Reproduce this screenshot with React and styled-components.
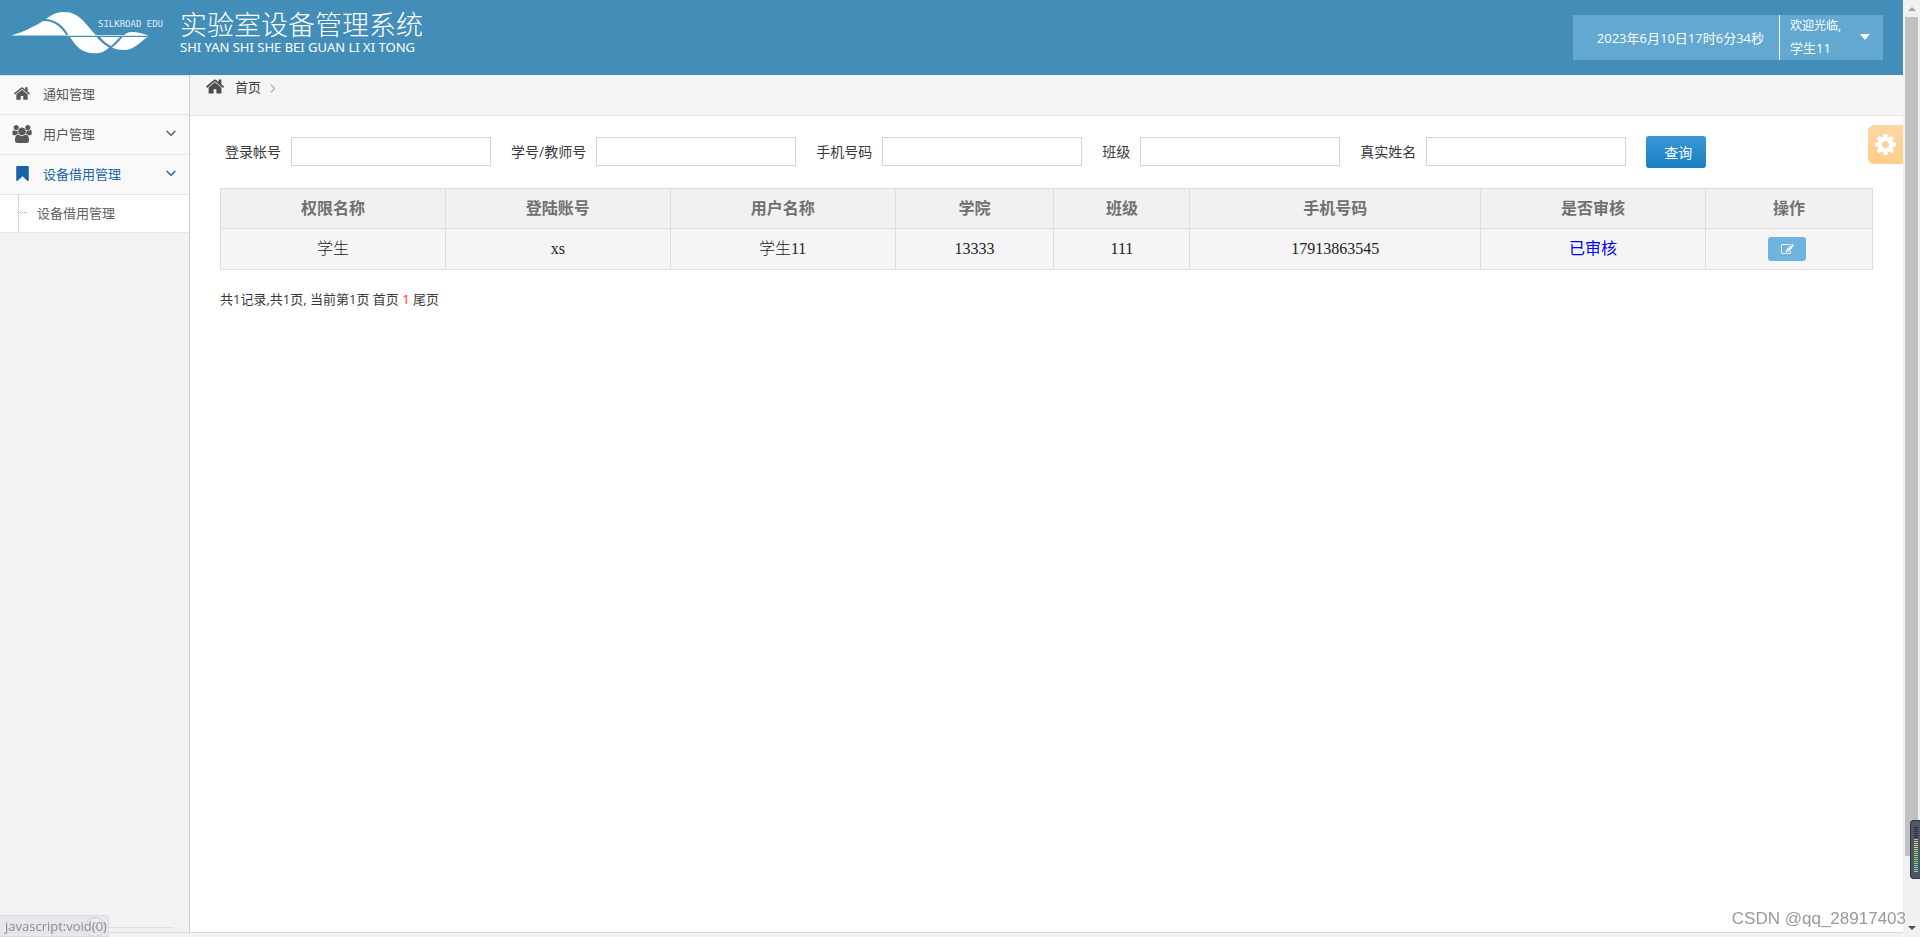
import React from 'react'
import styled, { createGlobalStyle } from 'styled-components'

const GlobalStyle = createGlobalStyle`
	* {
		box-sizing: border-box;
	}
	body {
		margin: 0;
		background-color: #f2f2f2;
		color: #393939;
		font-family: 'Open Sans', 'Noto Sans CJK SC', sans-serif;
		font-size: 13px;
		line-height: 20px;
	}
	a {
		color: inherit;
		text-decoration: none;
	}
	button,
	input {
		font-family: inherit;
	}
`

const Screen = styled.div`
	display: flex;
	min-height: 100vh;
`
const Page = styled.div`
	display: flex;
	flex: 1;
	min-width: 0;
	flex-direction: column;
`

const Header = styled.header`
	display: flex;
	justify-content: space-between;
	align-items: flex-start;
	height: 75px;
	padding: 0 20px 0 11px;
	background-color: #438eb9;
	color: white;
`
const Brand = styled.div`
	display: flex;
	padding-top: 10px;
	svg {
		display: block;
		margin-right: 13px;
	}
`
const BrandName = styled.h1`
	margin: 0;
	font-weight: 300;
	font-size: 27px;
	line-height: 30px;
`
const BrandPinyin = styled.div`
	font-family: 'Noto Sans', sans-serif;
	font-size: 13px;
	line-height: 14px;
	white-space: nowrap;
`
const UserBar = styled.div`
	display: flex;
	height: 45px;
	margin-top: 15px;
	background-color: #62a8d1;
`
const Clock = styled.div`
	display: flex;
	align-items: center;
	padding: 0 15px 0 24px;
	border-right: 1px solid white;
`
const UserButton = styled.button`
	display: flex;
	align-items: center;
	justify-content: space-between;
	width: 103px;
	padding: 0 13px 2px 10px;
	border: 0;
	background: none;
	color: white;
	font-size: 13px;
	line-height: 22px;
	text-align: left;
	cursor: pointer;
	small {
		display: block;
		font-size: 12px;
	}
`
const Caret = styled.span`
	border-top: 6px solid white;
	border-left: 5px solid transparent;
	border-right: 5px solid transparent;
`

const Body = styled.div`
	display: flex;
	flex: 1;
`
const Sidebar = styled.nav`
	display: flex;
	flex-direction: column;
	width: 190px;
	border-right: 1px solid #ccc;
`
const MenuList = styled.ul`
	flex: 1;
	margin: 0;
	padding: 0;
	list-style: none;
`
const MenuLink = styled.a`
	display: flex;
	align-items: center;
	height: 40px;
	padding: 0 13px 2px 12px;
	border-bottom: 1px solid #e5e5e5;
	background-color: #f9f9f9;
	color: ${({ $active }) => ($active ? '#1963aa' : '#585858')};
	li:first-child > & {
		box-shadow: inset 0 1px #e0e0e0;
	}
`
const MenuIcon = styled.span`
	display: flex;
	justify-content: center;
	width: 20px;
	margin-right: 11px;
`
const MenuText = styled.span`
	flex: 1;
`
const SubMenu = styled.ul`
	margin: 0;
	padding: 0 0 0 18px;
	list-style: none;
	border-bottom: 1px solid #e5e5e5;
	background-color: white;
`
const SubMenuLink = styled.a`
	display: flex;
	align-items: center;
	gap: 10px;
	height: 37px;
	padding-bottom: 2px;
	border-left: 1px dotted #9dbdd6;
	color: #616161;
	&::before {
		content: '';
		width: 8px;
		border-top: 1px dotted #9dbdd6;
	}
`
const Collapse = styled.div`
	display: flex;
	align-items: center;
	height: 10px;
	padding: 0 15px;
	&::before,
	&::after {
		content: '';
		flex: 1;
		border-top: 1px solid #e0e0e0;
	}
`
const CollapseButton = styled.button`
	display: flex;
	justify-content: center;
	align-items: center;
	width: 20px;
	height: 20px;
	padding: 0;
	border: 1px solid #999;
	border-radius: 10px;
	background-color: white;
	color: #777;
`

const Main = styled.main`
	flex: 1;
	min-width: 0;
	background-color: white;
`
const Breadcrumb = styled.div`
	display: flex;
	align-items: flex-start;
	height: 41px;
	padding: 2px 16px;
	border-bottom: 1px solid #e5e5e5;
	background-color: #f5f5f5;
	color: #4c4c4c;
	svg {
		margin-top: 2px;
	}
	svg:last-child {
		margin-top: 7px;
	}
	a {
		margin: 0 9px 0 11px;
		color: #393939;
	}
`
const Content = styled.div`
	padding: 20px 30px;
`
const SearchForm = styled.form`
	display: flex;
	flex-wrap: wrap;
	align-items: flex-start;
	gap: 20px;
	padding-left: 5px;
	margin-bottom: 20px;
`
const Field = styled.label`
	display: flex;
	align-items: center;
	gap: 10px;
	padding-top: 1px;
	font-size: 14px;
	white-space: nowrap;
`
const TextInput = styled.input`
	width: 200px;
	height: 29px;
	padding: 4px;
	border: 1px solid #d5d5d5;
`
const SearchButton = styled.button`
	height: 32px;
	padding: 0 14px 0 18px;
	border: 0;
	border-radius: 3px;
	background-image: linear-gradient(#3b98d6, #197ec1);
	color: white;
	font-size: 14px;
	cursor: pointer;
`

const Table = styled.table`
	width: 100%;
	table-layout: fixed;
	border-collapse: collapse;
	font-size: 16px;
	text-align: center;
	th,
	td {
		padding: 0;
		border: 1px solid #ddd;
	}
	th {
		height: 40px;
		padding-bottom: 2px;
		background-color: #f1f1f1;
		color: #707070;
		font-weight: 700;
	}
	td {
		height: 41px;
		background-color: #f5f5f5;
		color: #222;
		font-family: 'Liberation Serif', 'Noto Sans CJK SC', serif;
		font-weight: 300;
	}
`
const Checked = styled.span`
	color: #0000ff;
	font-weight: 400;
`
const EditButton = styled.button`
	display: inline-flex;
	justify-content: center;
	align-items: center;
	width: 38px;
	height: 24px;
	margin-right: 4px;
	padding: 0;
	border: 0;
	border-radius: 3px;
	background-color: #6fb3e0;
	color: white;
	vertical-align: middle;
	cursor: pointer;
`
const Pager = styled.div`
	margin-top: 19px;
	b {
		color: #ff3300;
		font-weight: 400;
	}
`
const BottomBar = styled.div`
	height: 5px;
	border-top: 1px solid #d9d9d9;
`

const SettingsButton = styled.button`
	position: fixed;
	top: 125px;
	right: 17px;
	display: flex;
	justify-content: center;
	align-items: center;
	width: 35px;
	height: 39px;
	padding: 0;
	border: 0;
	border-radius: 6px 0 0 6px;
	background-image: linear-gradient(#fdd7a5, #fecd88);
	color: white;
`
const StatusBubble = styled.div`
	position: fixed;
	left: 0;
	bottom: 0;
	width: 109px;
	height: 22px;
	padding-left: 5px;
	border: 1px solid #dcdde2;
	border-left: 0;
	border-radius: 0 4px 0 0;
	background-color: rgba(226, 228, 235, 0.7);
	color: #8a8a8e;
	line-height: 20px;
`
const Watermark = styled.div`
	position: fixed;
	right: 14px;
	bottom: 8px;
	color: #999;
	font-family: 'Liberation Sans', sans-serif;
	font-size: 17px;
	text-shadow: 1px 1px white;
`

const ScrollTrack = styled.div`
	display: flex;
	flex-direction: column;
	align-items: center;
	width: 17px;
	height: 100vh;
	padding: 7px 0;
	background-color: #f1f1f1;
`
const ScrollArrow = styled.span`
	border-left: 4px solid transparent;
	border-right: 4px solid transparent;
	border-bottom: ${({ $down }) => ($down ? '0' : '4px solid #a3a3a3')};
	border-top: ${({ $down }) => ($down ? '4px solid #505050' : '0')};
`
const ScrollRail = styled.div`
	flex: 1;
	width: 13px;
	margin: 6px 0 16px;
`
const ScrollThumb = styled.div`
	height: 94%;
	background-color: #c1c1c1;
`
const Meter = styled.div`
	position: fixed;
	right: 0;
	bottom: 58px;
	display: flex;
	flex-direction: column;
	gap: 1px;
	width: 10px;
	height: 59px;
	padding: 6px 1px 0 3px;
	border: 1px solid #2e3240;
	border-right: 0;
	border-radius: 4px 0 0 4px;
	background-color: #50566a;
`
const MeterBar = styled.span`
	width: 4px;
	height: 1px;
	background-color: ${({ $color }) => $color};
`

const PATHS = {
	home: 'M1408 992v480q0 26-19 45t-45 19h-384v-384h-256v384h-384q-26 0-45-19t-19-45v-480q0-1 .5-3t.5-3l575-474 575 474q1 2 1 6zm223-69l-62 74q-8 9-21 11h-3q-13 0-21-7l-692-577-692 577q-12 8-24 7-13-2-21-11l-62-74q-8-10-7-23.5t11-21.5l719-599q32-26 76-26t76 26l244 204v-195q0-14 9-23t23-9h192q14 0 23 9t9 23v408l219 182q10 8 11 21.5t-7 23.5z',
	users: 'M593 896q-162 5-265 128h-134q-82 0-138-40.5t-56-118.5q0-353 124-353 6 0 43.5 21t97.5 42.5 119 21.5q67 0 133-23-5 37-5 66 0 159 97 287zm1071 637q0 120-73 189.5t-194 69.5h-874q-121 0-194-69.5t-73-189.5q0-53 3.5-103.5t14-109 26.5-108.5 43-97.5 62-81 85.5-53.5 111.5-20q10 0 43 21.5t73 48 107 48 135 21.5 135-21.5 107-48 73-48 43-21.5q61 0 111.5 20t85.5 53.5 62 81 43 97.5 26.5 108.5 14 109 3.5 103.5zm-1024-1277q0 106-75 181t-181 75-181-75-75-181 75-181 181-75 181 75 75 181zm704 384q0 159-112.5 271.5t-271.5 112.5-271.5-112.5-112.5-271.5 112.5-271.5 271.5-112.5 271.5 112.5 112.5 271.5zm576 225q0 78-56 118.5t-138 40.5h-134q-103-123-265-128 97-128 97-287 0-29-5-66 66 23 133 23 59 0 119-21.5t97.5-42.5 43.5-21q124 0 124 353zm-128-609q0 106-75 181t-181 75-181-75-75-181 75-181 181-75 181 75 75 181z',
	bookmark: 'M100 0h1080q100 0 100 100v1340q0 90-80 90-40 0-70-30l-490-450-490 450q-30 30-70 30-80 0-80-90v-1340q0-100 100-100z',
	edit: 'M888 1184l116-116-152-152-116 116v56h96v96h56zm440-720q-16-16-33 1l-350 350q-17 17-1 33t33-1l350-350q17-17 1-33zm80 594v190q0 119-84.5 203.5t-203.5 84.5h-832q-119 0-203.5-84.5t-84.5-203.5v-832q0-119 84.5-203.5t203.5-84.5h832q63 0 117 25 15 7 18 23 3 17-9 29l-49 49q-14 14-32 8-23-6-45-6h-832q-66 0-113 47t-47 113v832q0 66 47 113t113 47h832q66 0 113-47t47-113v-126q0-13 9-22l64-64q15-15 35-7t20 29zm-96-738l288 288-672 672h-288v-288zm444 132l-92 92-288-288 92-92q28-28 68-28t68 28l152 152q28 28 28 68t-28 68z',
	cog: 'M1024 896q0-106-75-181t-181-75-181 75-75 181 75 181 181 75 181-75 75-181zm512-109v222q0 12-8 23t-20 13l-185 28q-19 54-39 91 35 50 107 138 10 12 10 25t-9 23q-27 37-99 108t-94 71q-12 0-26-9l-138-108q-44 23-91 38-16 136-29 186-7 28-36 28h-222q-14 0-24.5-8.5t-11.5-21.5l-28-184q-49-16-90-37l-141 107q-10 9-25 9-14 0-25-11-126-114-165-168-7-10-7-23 0-12 8-23 15-21 51-66.5t54-70.5q-27-50-41-99l-183-27q-13-2-21-12.5t-8-23.5v-222q0-12 8-23t19-13l186-28q14-46 39-92-40-57-107-138-10-12-10-24 0-10 9-23 26-36 98.5-107.5t94.5-71.5q13 0 26 10l138 107q44-23 91-38 16-136 29-186 7-28 36-28h222q14 0 24.5 8.5t11.5 21.5l28 184q49 16 90 37l142-107q9-9 24-9 13 0 25 10 129 119 165 170 7 8 7 22 0 12-8 23-15 21-51 66.5t-54 70.5q26 50 41 98l183 28q13 2 21 12.5t8 23.5z',
}
const BOXES = {
	home: '20 250 1624 1290',
	users: '0 0 1920 1792',
	bookmark: '0 0 1280 1530',
	edit: '0 128 1792 1536',
	cog: '0 128 1536 1536',
}

function Icon({ name, width, height }) {
	return (
		<svg width={width} height={height} viewBox={BOXES[name]} fill='currentColor' aria-hidden='true'>
			<path d={PATHS[name]} />
		</svg>
	)
}

function Chevron({ down }) {
	return (
		<svg width={down ? 10 : 6} height={down ? 7 : 9} fill='none' stroke={down ? 'currentColor' : '#b2b6bf'} strokeWidth='1.4' aria-hidden='true'>
			<path d={down ? 'M.7 1l4.3 4.300L9.300 1' : 'M1 .8l3.600 3.700L1 8.200'} />
		</svg>
	)
}

function Logo() {
	return (
		<svg width='156' height='46' viewBox='11 10 156 46' fill='white' role='img' aria-label='SILKROAD EDU'>
			<path d='M11 35.500C24 32 35 26 43 21C52 20.500 60 25 66.500 35.500Z' />
			<path d='M46 19C52 14.500 57 12 64 12C80 12 86 25 96 35.200H68.500C63 25 56 20 46 19Z' />
			<path d='M70 37H96.500C100 41 104 44.500 109 47.500C105 51.500 101 53.300 95 53.300C81 53.300 76 46 70 37Z' />
			<path d='M100 37H120C117 40 114.500 43 111 46C106 43.500 103 40.500 100 37Z' />
			<path d='M122.500 37H147.500C140 42 134 50 124 50C119.500 50 116 49.300 112 47.500C116 44.500 119 41 122.500 37Z' />
			<path d='M124 35.300C127 32.500 130 32 133 32C138 32 142 33.700 147.500 35.300Z' />
			<path d='M66 35.100H148V35.900H66Z' opacity='0.7' />
			<text x='98' y='27' fontFamily="'DejaVu Sans Mono', monospace" fontSize='9' opacity='0.85'>
				SILKROAD EDU
			</text>
		</svg>
	)
}

const FIELDS = [
	{ id: 'account', label: '登录帐号' },
	{ id: 'number', label: '学号/教师号' },
	{ id: 'phone', label: '手机号码' },
	{ id: 'class', label: '班级' },
	{ id: 'realname', label: '真实姓名' },
]

const COLUMNS = [
	{ title: '权限名称', width: 225 },
	{ title: '登陆账号', width: 225 },
	{ title: '用户名称', width: 225 },
	{ title: '学院', width: 159 },
	{ title: '班级', width: 136 },
	{ title: '手机号码', width: 291 },
	{ title: '是否审核', width: 225 },
	{ title: '操作', width: 167 },
]
const TOTAL_WIDTH = COLUMNS.reduce((sum, c) => sum + c.width, 0)

const USERS = [['学生', 'xs', '学生11', '13333', '111', '17913863545']]

// unlit bars first, then from orange down to teal
const METER = [
	...Array(6).fill('#2b2e3a'),
	...Array.from({ length: 17 }, (_, i) => `hsl(${40 + i * 8}, 62%, 66%)`),
]

function TopHeader() {
	return (
		<Header>
			<Brand>
				<Logo />
				<div>
					<BrandName>实验室设备管理系统</BrandName>
					<BrandPinyin>SHI YAN SHI SHE BEI GUAN LI XI TONG</BrandPinyin>
				</div>
			</Brand>
			<UserBar>
				<Clock>2023年6月10日17时6分34秒</Clock>
				<UserButton type='button'>
					<span>
						<small>欢迎光临,</small>
						学生11
					</span>
					<Caret />
				</UserButton>
			</UserBar>
		</Header>
	)
}

function SideMenu() {
	return (
		<Sidebar>
			<MenuList>
				<li>
					<MenuLink href='#notice'>
						<MenuIcon><Icon name='home' width={16} height={13} /></MenuIcon>
						<MenuText>通知管理</MenuText>
					</MenuLink>
				</li>
				<li>
					<MenuLink href='#users'>
						<MenuIcon><Icon name='users' width={20} height={18} /></MenuIcon>
						<MenuText>用户管理</MenuText>
						<Chevron down />
					</MenuLink>
				</li>
				<li>
					<MenuLink href='#devices' $active>
						<MenuIcon><Icon name='bookmark' width={13} height={15} /></MenuIcon>
						<MenuText>设备借用管理</MenuText>
						<Chevron down />
					</MenuLink>
					<SubMenu>
						<li>
							<SubMenuLink href='#borrow'>设备借用管理</SubMenuLink>
						</li>
					</SubMenu>
				</li>
			</MenuList>
			<Collapse>
				<CollapseButton type='button' aria-label='收起菜单'>
					<svg width='8' height='8' fill='none' stroke='currentColor' aria-hidden='true'>
						<path d='M4 1L1 4l3 3M7 1L4 4l3 3' />
					</svg>
				</CollapseButton>
			</Collapse>
		</Sidebar>
	)
}

function UserTable() {
	return (
		<Table>
			<colgroup>
				{COLUMNS.map((c) => (
					<col key={c.title} style={{ width: `${(c.width / TOTAL_WIDTH) * 100}%` }} />
				))}
			</colgroup>
			<thead>
				<tr>
					{COLUMNS.map((c) => (
						<th key={c.title}>{c.title}</th>
					))}
				</tr>
			</thead>
			<tbody>
				{USERS.map((row) => (
					<tr key={row[1]}>
						{row.map((value, i) => (
							<td key={i}>{value}</td>
						))}
						<td><Checked>已审核</Checked></td>
						<td>
							<EditButton type='button' aria-label='编辑'>
								<Icon name='edit' width={13} height={11} />
							</EditButton>
						</td>
					</tr>
				))}
			</tbody>
		</Table>
	)
}

function App() {
	return (
		<Screen>
			<GlobalStyle />
			<Page>
				<TopHeader />
				<Body>
					<SideMenu />
					<Main>
						<Breadcrumb>
							<Icon name='home' width={18} height={15} />
							<a href='#home'>首页</a>
							<Chevron />
						</Breadcrumb>
						<Content>
							<SearchForm>
								{FIELDS.map((f) => (
									<Field key={f.id} htmlFor={f.id}>
										{f.label}
										<TextInput id={f.id} type='text' />
									</Field>
								))}
								<SearchButton type='button'>查询</SearchButton>
							</SearchForm>
							<UserTable />
							<Pager>
								共1记录,共1页, 当前第1页 <a href='#first'>首页</a> <b>1</b> <a href='#last'>尾页</a>
							</Pager>
						</Content>
					</Main>
				</Body>
				<BottomBar />
			</Page>
			<ScrollTrack>
				<ScrollArrow />
				<ScrollRail>
					<ScrollThumb />
				</ScrollRail>
				<ScrollArrow $down />
			</ScrollTrack>
			<SettingsButton type='button' aria-label='设置'>
				<Icon name='cog' width={21} height={21} />
			</SettingsButton>
			<StatusBubble>javascript:void(0)</StatusBubble>
			<Meter>
				{METER.map((color, i) => (
					<MeterBar key={i} $color={color} />
				))}
			</Meter>
			<Watermark>CSDN @qq_28917403</Watermark>
		</Screen>
	)
}
export default App
